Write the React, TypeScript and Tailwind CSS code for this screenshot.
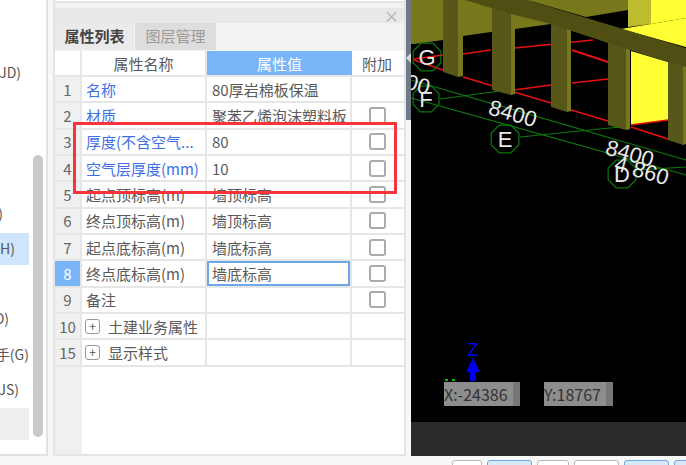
import React from "react";

type Row = {
  no: string;
  name: string;
  value?: string;
  blue?: boolean;
  check?: boolean;
  selected?: boolean;
  group?: boolean;
};

const rows: Row[] = [
  { no: "1", name: "名称", value: "80厚岩棉板保温", blue: true },
  { no: "2", name: "材质", value: "聚苯乙烯泡沫塑料板", blue: true, check: true },
  { no: "3", name: "厚度(不含空气...", value: "80", blue: true, check: true },
  { no: "4", name: "空气层厚度(mm)", value: "10", blue: true, check: true },
  { no: "5", name: "起点顶标高(m)", value: "墙顶标高", check: true },
  { no: "6", name: "终点顶标高(m)", value: "墙顶标高", check: true },
  { no: "7", name: "起点底标高(m)", value: "墙底标高", check: true },
  { no: "8", name: "终点底标高(m)", value: "墙底标高", check: true, selected: true },
  { no: "9", name: "备注", check: true },
  { no: "10", name: "土建业务属性", group: true },
  { no: "15", name: "显示样式", group: true },
];

const sideItems = [
  { label: "JD)", cls: "pr-[8px]" },
  { label: "", cls: "" },
  { label: "", cls: "" },
  { label: "", cls: "" },
  { label: ")", cls: "pr-[26px]" },
  { label: "H)", cls: "pr-[14px] bg-[#cfe5fb]" },
  { label: "", cls: "" },
  { label: "D)", cls: "pr-[20px]" },
  { label: "手(G)", cls: "pr-0" },
  { label: "JS)", cls: "pr-[10px]" },
  { label: "", cls: "bg-[#eeeeee]" },
];

const toolbarButtons = [
  "w-[30px] bg-white border-[#b9b9b9]",
  "w-[45px] bg-[#d7e8fa] border-[#6fa8e6]",
  "w-[32px] bg-white border-[#b9b9b9]",
  "w-[45px] bg-white border-[#b9b9b9]",
  "w-[45px] bg-[#d7e8fa] border-[#6fa8e6]",
  "w-[20px] bg-[#d7e8fa] border-[#6fa8e6]",
];

function SidePanel() {
  return (
    <div className="flex h-[456px] w-[48px] shrink-0 border-r-2 border-b-2 border-[#e2e2e2] bg-white">
      <div className="w-[29px] shrink-0 overflow-hidden pt-[55px]">
        {sideItems.map((item, i) => (
          <div key={i} className="flex h-[35.2px] items-center">
            <div
              className={`flex h-[32px] w-[29px] items-center justify-end whitespace-nowrap text-[14px] text-[#555] ${item.cls}`}
            >
              {item.label}
            </div>
          </div>
        ))}
      </div>
      <div className="ml-[4px] mt-[155px] h-[282px] w-[10px] rounded-[5px] bg-[#c9c9c9]" />
    </div>
  );
}

function PropertyRow({ row }: { row: Row }) {
  const nameColor = row.blue ? "text-[#3f6fe8]" : "text-[#5a5a5a]";
  return (
    <div className="flex h-[26.33px] border-b-2 border-[#e6e6e6] text-[15px] leading-none">
      <div
        className={`flex w-[27px] shrink-0 items-center justify-center border-r-2 border-[#e6e6e6] ${
          row.selected ? "bg-[#7ab6f7] text-white" : "bg-[#f0f0f0] text-[#666]"
        }`}
      >
        {row.no}
      </div>
      <div
        className={`flex w-[125px] shrink-0 items-center whitespace-nowrap border-r-2 border-[#e6e6e6] pl-[4px] ${nameColor}`}
      >
        {row.group ? (
          <>
            <span className="-ml-px mr-[8px] flex h-[15px] w-[15px] items-center justify-center rounded-[3px] border border-[#999] text-[12px] text-[#555]">
              +
            </span>
            {row.name}
          </>
        ) : (
          row.name
        )}
      </div>
      <div className="flex w-[145px] shrink-0 items-center border-r-2 border-[#e6e6e6] text-[#5a5a5a]">
        <div
          className={`flex h-full w-full items-center whitespace-nowrap ${
            row.selected ? "border-2 border-[#6ea8e8] pl-[3px]" : "pl-[5px]"
          }`}
        >
          {row.value}
        </div>
      </div>
      <div className="flex w-[50px] shrink-0 items-center justify-center">
        {row.check && (
          <span className="h-[17px] w-[17px] rounded-[3px] border-2 border-[#ababab] bg-white" />
        )}
      </div>
    </div>
  );
}

function PropertyPanel() {
  return (
    <div className="ml-[5px] flex h-[456px] w-[353px] shrink-0 flex-col border-r-2 border-b-2 border-l-2 border-[#e4e4e4] bg-[#f3f3f3]">
      <div className="h-[3px] border-b-2 border-[#e4e4e4] bg-white" />
      <div className="mt-[5px] flex h-[15px] items-center justify-end bg-[#e8e8e8] pr-[5px] text-[15px] leading-none text-[#a8a8a8]">
        ×
      </div>
      <div className="flex h-[27px] text-[15px]">
        <div className="flex w-[79px] items-center justify-center bg-[#eaeaea] font-bold text-[#444]">
          属性列表
        </div>
        <div className="ml-px flex w-[81px] items-center justify-center bg-[#dddddd] text-[#9a9a9a]">
          图层管理
        </div>
      </div>
      <div className="mt-px flex flex-1 flex-col bg-white">
        <div className="flex h-[26px] border-b-2 border-[#e6e6e6] text-[15px] leading-none">
          <div className="w-[27px] shrink-0 border-r-2 border-[#e6e6e6]" />
          <div className="flex w-[125px] shrink-0 items-center justify-center border-r-2 border-[#e6e6e6] text-[#5a5a5a]">
            属性名称
          </div>
          <div className="flex w-[145px] shrink-0 items-center justify-center bg-[#7ab6f7] text-white">
            属性值
          </div>
          <div className="flex w-[50px] shrink-0 items-center justify-center text-[#5a5a5a]">
            附加
          </div>
        </div>
        {rows.map((row) => (
          <PropertyRow key={row.no} row={row} />
        ))}
        <div className="w-[27px] flex-1 bg-[#f0f0f0]" />
      </div>
    </div>
  );
}

function Octagon({ x, y, r, label }: { x: number; y: number; r: number; label: string }) {
  const pts = Array.from({ length: 8 }, (_, i) => {
    const a = (Math.PI / 4) * i + Math.PI / 8;
    return `${x + r * Math.cos(a)},${y + r * Math.sin(a)}`;
  }).join(" ");
  return (
    <g>
      <polygon points={pts} fill="none" stroke="#0c7a0c" strokeWidth="1.2" />
      <text x={x} y={y + 8} textAnchor="middle" fontSize="22" fill="#e8e8e8" fontFamily="Liberation Sans, sans-serif">
        {label}
      </text>
    </g>
  );
}

// structural model: back wall, columns, beam, grid axes
function ModelView() {
  const columns = [
    { x: 443, w: 15, s: 5, top: 0, b: 72 },
    { x: 492, w: 19, s: 4, top: 0, b: 90 },
    { x: 551, w: 16, s: 4, top: 20, b: 107 },
    { x: 608, w: 18, s: 4, top: 40, b: 125 },
    { x: 668, w: 15, s: 3, top: 60, b: 140 },
  ];
  return (
    <svg className="block h-[456px] w-[275px]" viewBox="411 0 275 456">
      <rect x="411" y="0" width="275" height="422" fill="#000" />
      <rect x="411" y="422" width="275" height="34" fill="#2b2b2b" />

      {/* back wall above the openings */}
      <polygon points="411,0 530,0 551,24 515,29 491,32 463,36 443,40 414,44 411,44" fill="#77771c" />
      <polygon points="527,0 628,0 628,10 586,17" fill="#77771c" />
      <polygon points="628,0 651,0 651,24 628,27" fill="#bcbc2e" />
      <polygon points="651,0 686,0 686,18 651,24" fill="#ffff33" />
      <polygon points="621,29 651,24 686,18 686,47" fill="#ffff33" />
      <polygon points="631,51 668,62 668,120 631,125" fill="#ffff33" />

      {/* red wall lines */}
      <g stroke="#e81010" strokeWidth="1.5" fill="none">
        <path d="M414 59 L443 55 M463 54 L491 50 M515 48 L593 40" />
        <path d="M572 50 L608 62" strokeWidth="2" />
        <path d="M514 90 L551 85 M572 83 L608 79 M631 125 L668 120" />
        <path d="M414 60 L443 70 M463 77 L493 86 M514 92 L551 103 M571 110 L608 121 M631 127 L668 139" />
      </g>

      {columns.map((c) => (
        <g key={c.x}>
          <polygon
            points={`${c.x},${c.top} ${c.x + c.w},${c.top} ${c.x + c.w},${c.b + 5} ${c.x},${c.b}`}
            fill="#57571a"
          />
          <polygon
            points={`${c.x + c.w},${c.top + 6} ${c.x + c.w + c.s},${c.top + 6} ${c.x + c.w + c.s},${c.b + 4} ${c.x + c.w},${c.b + 5}`}
            fill="#77771f"
          />
        </g>
      ))}

      {/* beam */}
      <polygon points="465,0 527,0 686,48 686,67 668,62 608,43 551,24 511,14" fill="#4f4f14" />

      {/* grid axes */}
      <g stroke="#0c7a0c" strokeWidth="1.2" fill="none">
        <path d="M411 80 L686 160 M411 98 L686 175" />
        <path d="M440 99 L500 91 M520 137 L620 127 M637 170 L686 167" />
      </g>
      <Octagon x={427} y={57} r={15} label="G" />
      <Octagon x={426} y={99} r={14} label="F" />
      <Octagon x={505} y={139} r={15} label="E" />
      <Octagon x={622} y={174} r={15} label="D" />

      <g fontSize="22" fill="#e8e8e8" fontFamily="Liberation Sans, sans-serif" textAnchor="middle">
        <text x="418" y="92" transform="rotate(16 418 84)">00</text>
        <text x="513" y="121" transform="rotate(16 513 113)">8400</text>
        <text x="630" y="161" transform="rotate(16 630 153)">8400</text>
        <text x="642" y="178" transform="rotate(16 642 170)">4 860</text>
      </g>

      {/* axis gizmo */}
      <text x="473" y="356" textAnchor="middle" fontSize="18" fill="#0000f0" fontFamily="Liberation Sans, sans-serif">
        Z
      </text>
      <polygon points="473,358 480,372 476,372 476,381 470,381 470,372 466,372" fill="#0000f0" />
      <path d="M445 380 L448 380 M452 380 L455 380" stroke="#00c000" strokeWidth="2" />
    </svg>
  );
}

function CoordBox({ text, className, barClass }: { text: string; className: string; barClass: string }) {
  return (
    <div className={`absolute top-[382px] flex h-[24px] bg-[#8d8d8d] text-[16px] leading-[24px] text-[#333] ${className}`}>
      <span className="flex-1 whitespace-nowrap">{text}</span>
      <span className={`border-r border-black bg-[#777] ${barClass}`} />
    </div>
  );
}

export default function App() {
  return (
    <div className="relative h-[465px] w-[686px] overflow-hidden bg-[#f7f7f7] font-['Noto_Sans_CJK_SC',sans-serif]">
      <div className="flex">
        <SidePanel />
        <PropertyPanel />
        {/* splitter */}
        <div className="w-[5px] shrink-0">
          <div className="h-[120px] bg-[#6f7a88] pt-[53px]">
            <div className="h-0 w-0 border-y-[5px] border-r-[5px] border-y-transparent border-r-[#d8d8d8]" />
          </div>
        </div>
        <div className="shrink-0">
          <ModelView />
        </div>
      </div>

      <div className="ml-[452px] mt-[4px] flex gap-[5px]">
        {toolbarButtons.map((cls, i) => (
          <div key={i} className={`h-[12px] shrink-0 rounded-[3px] border ${cls}`} />
        ))}
      </div>

      <CoordBox text="X:-24386" className="left-[444px] w-[77px]" barClass="w-[8px]" />
      <CoordBox text="Y:18767" className="left-[544px] w-[70px]" barClass="w-[8px]" />

      {/* highlight frame drawn over the table */}
      <div className="pointer-events-none absolute left-[73px] top-[122px] h-[72px] w-[324px] border-[3.5px] border-[#f8343a]" />
    </div>
  );
}
